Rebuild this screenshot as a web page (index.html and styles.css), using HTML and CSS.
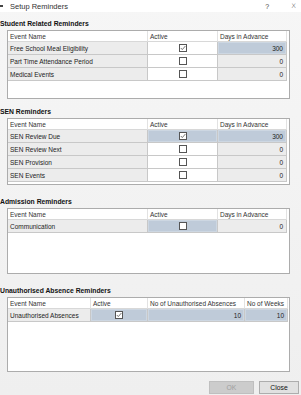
FILE: index.html
```
<!DOCTYPE html>
<html lang="en">
  <head>
    <meta charset="UTF-8" />
    <meta name="viewport" content="width=device-width, initial-scale=1.0" />
    <title>Setup Reminders</title>
    <link rel="stylesheet" href="styles.css">
  </head>
  <body>
    <div class="window">
      <div class="titlebar"><!-- window caption -->
        <span class="app-icon"></span>
        <span class="title">Setup Reminders</span>
        <span class="caption-btns">
          <span class="help">?</span>
          <span class="close-x">X</span>
        </span>
      </div>

      <section class="group group-student">
        <h2>Student Related Reminders</h2>
        <div class="grid cols-3 h-student">
          <div class="row head"><div>Event Name</div><div>Active</div><div>Days in Advance</div></div>
          <div class="row">
            <div class="name">Free School Meal Eligibility</div>
            <div class="check"><svg width="8" height="8" viewBox="0 0 8 8"><rect x="0.5" y="0.5" width="7" height="7" fill="#fff" stroke="#555"/><polyline points="1.8,4 3.3,5.6 6.4,2" fill="none" stroke="#555" stroke-width="0.8"/></svg></div>
            <div class="num sel">300</div>
          </div>
          <div class="row">
            <div class="name">Part Time Attendance Period</div>
            <div class="check"><span class="box"></span></div>
            <div class="num">0</div>
          </div>
          <div class="row">
            <div class="name">Medical Events</div>
            <div class="check"><span class="box"></span></div>
            <div class="num">0</div>
          </div>
        </div>
      </section>

      <section class="group group-sen">
        <h2>SEN Reminders</h2>
        <div class="grid cols-3 h-sen">
          <div class="row head"><div>Event Name</div><div>Active</div><div>Days in Advance</div></div>
          <div class="row">
            <div class="name">SEN Review Due</div>
            <div class="check sel"><svg width="8" height="8" viewBox="0 0 8 8"><rect x="0.5" y="0.5" width="7" height="7" fill="#fff" stroke="#555"/><polyline points="1.8,4 3.3,5.6 6.4,2" fill="none" stroke="#555" stroke-width="0.8"/></svg></div>
            <div class="num sel">300</div>
          </div>
          <div class="row">
            <div class="name">SEN Review Next</div>
            <div class="check"><span class="box"></span></div>
            <div class="num">0</div>
          </div>
          <div class="row">
            <div class="name">SEN Provision</div>
            <div class="check"><span class="box"></span></div>
            <div class="num">0</div>
          </div>
          <div class="row">
            <div class="name">SEN Events</div>
            <div class="check"><span class="box"></span></div>
            <div class="num">0</div>
          </div>
        </div>
      </section>

      <section class="group group-admission">
        <h2>Admission Reminders</h2>
        <div class="grid cols-3 h-admission">
          <div class="row head"><div>Event Name</div><div>Active</div><div>Days in Advance</div></div>
          <div class="row">
            <div class="name">Communication</div>
            <div class="check sel"><span class="box"></span></div>
            <div class="num">0</div>
          </div>
        </div>
      </section>

      <section class="group group-absence">
        <h2>Unauthorised Absence Reminders</h2>
        <div class="grid cols-4 h-absence">
          <div class="row head"><div>Event Name</div><div>Active</div><div>No of Unauthorised Absences</div><div>No of Weeks</div></div>
          <div class="row">
            <div class="name">Unauthorised Absences</div>
            <div class="check sel"><svg width="8" height="8" viewBox="0 0 8 8"><rect x="0.5" y="0.5" width="7" height="7" fill="#fff" stroke="#555"/><polyline points="1.8,4 3.3,5.6 6.4,2" fill="none" stroke="#555" stroke-width="0.8"/></svg></div>
            <div class="num sel">10</div>
            <div class="num sel">10</div>
          </div>
        </div>
      </section>

      <div class="buttons"><!-- dialog buttons -->
        <button class="btn" disabled>OK</button>
        <button class="btn">Close</button>
      </div>
    </div>
  </body>
</html>
```

FILE: styles.css
```
/* dialog window */
* {
  margin: 0;
  padding: 0;
  box-sizing: border-box;
}
body {
  background: #f1f1f1;
  font-family: "Liberation Sans", Arial, sans-serif;
  font-size: 6.5px;
  color: #222;
}
.window {
  width: 301px;
  height: 395px;
  display: flex;
  flex-direction: column;
  background: linear-gradient(#f6f6f6, #efefef);
}
.titlebar {   /* caption bar */
  height: 12px;
  display: flex;
  align-items: center;
  background: #fff;
  font-size: 7.5px;
  color: #333;
}
.app-icon {
  width: 3px;
  height: 2px;
  background: #444;
  margin-right: 7px;
}
.title {
  flex: 1;
}
.caption-btns {
  display: flex;
  align-items: center;
  gap: 22px;
  padding-right: 5px;
}
.help {
  font-size: 7px;
  color: #444;
}
.close-x {
  font-family: "DejaVu Sans", sans-serif;
  font-size: 7px;
  font-weight: 300;
  color: #444;
  transform: scaleY(0.9);
}

/* groups */
.group h2 {
  height: 10px;
  line-height: 10px;
  font-size: 6.8px;
  font-weight: bold;
  color: #111;
  margin-bottom: 1px;
}
.group-student { margin-top: 7px; }
.group-sen { margin-top: 8px; }
.group-admission { margin-top: 12px; }
.group-absence { margin-top: 12px; }

.grid {   /* the data grid box */
  margin-left: 7px;
  width: 283px;
  background: #fff;
  border: 1px solid #acacac;
}
.h-student { height: 69px; }
.h-sen { height: 67px; }
.h-admission { height: 66px; }
.h-absence { height: 75px; }

.row {
  display: grid;
  height: 13px;
}
.cols-3 .row { grid-template-columns: 140px 70px 69px; }
.cols-4 .row { grid-template-columns: 83px 57px 97px 43px; }
.row > div {
  display: flex;
  align-items: center;
  padding: 0 2px;
  border-right: 1px solid #c8c8c8;
  border-bottom: 1px solid #c8c8c8;
  white-space: nowrap;
  overflow: hidden;
}
.row.head {
  height: 11px;
}
.row.head > div {
  border-right: 1px solid #e2e2e2;
  border-bottom: 1px solid #d8d8d8;
  background: #fff;
  color: #333;
}
.name {
  background: #ececec;
}
.check {
  justify-content: center;
  background: #fff;
}
.num {
  justify-content: flex-end;
  background: #ececec;
  padding-right: 3px !important;
}
.sel {
  background: #bfcbd9;
  box-shadow: inset 0 0 0 1px #cdd7e2;
}
.box {
  width: 8px;
  height: 8px;
  border: 1px solid #555;
  background: #fff;
}

/* buttons */
.buttons {
  margin-top: auto;
  margin-bottom: 1px;
  display: flex;
  justify-content: flex-end;
  gap: 5px;
  padding-right: 2px;
}
.btn {
  width: 45px;
  height: 13px;
  font-family: "Liberation Sans", Arial, sans-serif;
  font-size: 6.8px;
  background: #e1e1e1;
  border: 1px solid #adadad;
  color: #111;
}
.btn:last-child {
  width: 40px;
}
.btn:disabled {
  background: #cccccc;
  border-color: #bfbfbf;
  color: #a0a0a0;
}
```
